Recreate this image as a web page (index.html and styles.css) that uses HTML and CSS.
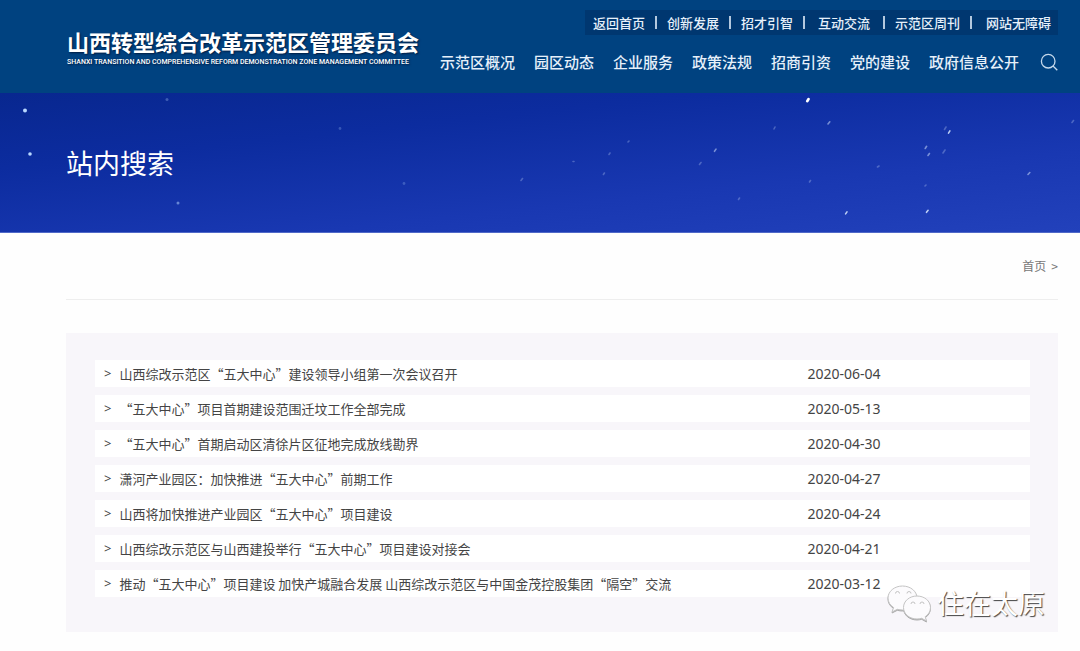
FILE: index.html
```html
<!DOCTYPE html>
<html lang="zh-CN">
<head>
<meta charset="utf-8">
<meta name="viewport" content="width=device-width, initial-scale=1">
<title>站内搜索</title>
<link rel="stylesheet" href="styles.css">
</head>
<body>
<header class="header">
  <a class="logo" href="#">
    <span class="logo-cn">山西转型综合改革示范区管理委员会</span>
    <span class="logo-en">SHANXI TRANSITION AND COMPREHENSIVE REFORM DEMONSTRATION ZONE MANAGEMENT COMMITTEE</span>
  </a>
  <div class="menus">
    <nav class="top-links" aria-label="快捷链接">
      <a href="#">返回首页</a><span class="bar"></span>
      <a href="#">创新发展</a><span class="bar"></span>
      <a href="#">招才引智</a><span class="bar"></span>
      <a class="spaced" href="#">互动交流</a><span class="bar"></span>
      <a href="#">示范区周刊</a><span class="bar"></span>
      <a class="last" href="#">网站无障碍</a>
    </nav>
    <div class="main-row">
      <nav class="main-nav" aria-label="主导航">
        <a href="#">示范区概况</a>
        <a href="#">园区动态</a>
        <a href="#">企业服务</a>
        <a href="#">政策法规</a>
        <a href="#">招商引资</a>
        <a href="#">党的建设</a>
        <a href="#">政府信息公开</a>
      </nav>
      <button class="search" type="button" aria-label="搜索">
        <svg viewBox="0 0 18 18" width="18" height="18"><circle cx="8.2" cy="8.2" r="6.8"/><path d="M13 13 17.300 17.300"/></svg>
      </button>
    </div>
  </div>
</header>

<section class="banner">
  <svg class="stars" viewBox="0 0 1080 140" preserveAspectRatio="xMidYMid slice" aria-hidden="true">
    <g fill="#b9d8ff">
      <circle cx="25" cy="18" r="2"/><circle cx="30" cy="61.500" r="1.800"/>
      <circle cx="167" cy="7" r="1.500" opacity=".3"/><circle cx="178" cy="110.500" r="1.500" opacity=".5"/>
      <circle cx="340" cy="36" r="1.400" opacity=".25"/><circle cx="404" cy="91" r="1.400" opacity=".25"/>
    </g>
    <g stroke="#d9e8ff" stroke-linecap="round" stroke-width="1.600">
      <path stroke="#fff" stroke-width="2.800" d="m807.300 8.600 1.200-2"/>
      <path opacity=".85" d="m948.500 40.600 1.400-2.200M926.500 119.800l1.600-2M845.600 121.400l1.400-2"/>
      <g opacity=".5"><path d="m714.500 58.800 1.500-2.200M928 63l1.400-2M925.200 56l1.400-2.200M1028 82l1.800-2M828 31.500l1.800-2.200"/></g>
      <g opacity=".28"><path d="m609 62 1-1.500M603.400 82l1-1.500M628 49.500l1-1M699.500 72l1.500-2M774 36.500l1-2M738.500 107l1-1.500M809.500 89.500l1-1.500M877.500 74.500l1.500-1M944.500 37l1.500-2.500M943 60.500l2-3M1072 30l1.500-2M521 88l1.500-2M573 69h1M925 93.500l1-1"/></g>
    </g>
  </svg>
  <h1 class="banner-title">站内搜索</h1>
</section>

<main class="content">
  <nav class="crumbs" aria-label="面包屑"><a href="#">首页</a><span>&gt;</span></nav>
  <section class="panel">
    <ul class="results">
      <li><a href="#">山西综改示范区“五大中心”建设领导小组第一次会议召开</a><time>2020-06-04</time></li>
      <li><a href="#">“五大中心”项目首期建设范围迁坟工作全部完成</a><time>2020-05-13</time></li>
      <li><a href="#">“五大中心”首期启动区清徐片区征地完成放线勘界</a><time>2020-04-30</time></li>
      <li><a href="#">潇河产业园区：加快推进“五大中心”前期工作</a><time>2020-04-27</time></li>
      <li><a href="#">山西将加快推进产业园区“五大中心”项目建设</a><time>2020-04-24</time></li>
      <li><a href="#">山西综改示范区与山西建投举行“五大中心”项目建设对接会</a><time>2020-04-21</time></li>
      <li><a href="#">推动“五大中心”项目建设 加快产城融合发展 山西综改示范区与中国金茂控股集团“隔空”交流</a><time>2020-03-12</time></li>
    </ul>
    <div class="watermark">
      <svg viewBox="0 0 46 38" width="46" height="38" aria-hidden="true">
        <path d="M16.500 2C8.500 2 2 7.300 2 14c0 4 2 7.200 5.600 9.500L6 28l5.300-2.700c1.800.5 3.400.7 5.200.7 8 0 14.500-5.300 14.500-12S24.500 2 16.500 2Z"/>
        <path d="M31 12c-7.500 0-13.500 5-13.500 11.500S23.500 35 31 35c1.700 0 3.300-.3 4.700-.7L40.500 37l-1.300-4.300c3.200-2.100 5.300-5.500 5.300-9.200C44.500 17 38.500 12 31 12Z"/>
        <path class="eye" d="M9.500 9.500a2 2 0 0 1 4 0M21 9.500a2 2 0 0 1 4 0M25 20a2 2 0 0 1 4 0M34 20a2 2 0 0 1 4 0"/>
      </svg>
      <span>住在太原</span>
    </div>
  </section>
</main>
</body>
</html>
```
FILE: styles.css
```css
* {
  box-sizing: border-box;
}

body {
  margin: 0;
  background: #fefefe;
  color: #444;
  font-family: "Noto Sans CJK SC", "Noto Sans", sans-serif;
  font-size: 13px;
}

a {
  color: inherit;
  text-decoration: none;
}

.header {
  display: flex;
  justify-content: space-between;
  padding: 10px 22px 19px 66px;
  background: #004280;
  color: #e6f0fa;
}

.logo {
  display: flex;
  flex-direction: column;
  padding: 16px 0 0 1px;
  color: #fff;
  text-shadow: 1px 1px 2px #001c40;
  white-space: nowrap;
}

.logo-cn {
  font-size: 22px;
  font-weight: 700;
  line-height: 30px;
}

.logo-en {
  font-family: Roboto, "Liberation Sans", sans-serif;
  font-size: 7px;
  font-weight: 500;
  line-height: 12px;
}

.menus {
  display: flex;
  flex-direction: column;
  align-items: flex-end;
  gap: 14px;
}

.top-links {
  display: flex;
  align-items: center;
  gap: 10px;
  padding: 0 7px 0 8px;
  background: #003770;
  font-weight: 500;
  line-height: 25px;
  white-space: nowrap;
}

.bar {
  width: 2px;
  height: 13px;
  background: #b4c8de;
}

.spaced {
  padding: 0 3px;
}

.last {
  padding-left: 4px;
}

.main-row {
  display: flex;
  align-items: center;
  gap: 21px;
}

.main-nav {
  display: flex;
  gap: 19px;
  font-size: 15px;
  font-weight: 500;
  line-height: 25px;
  white-space: nowrap;
}

.search {
  display: flex;
  padding: 0;
  border: 0;
  background: none;
}

.search svg {
  fill: none;
  stroke: #c5d9ec;
  stroke-width: 1.3;
}

.banner {
  position: relative;
  padding: 50px 66px;
  background: linear-gradient(174deg, #08278f 0%, #0c2c9f 30%, #1938b2 68%, #2241bb 100%);
  border-bottom: 1px solid #5069c8;
}

.stars {
  position: absolute;
  inset: 0;
  width: 100%;
  height: 100%;
}

.banner-title {
  position: relative;
  margin: 0;
  color: #fff;
  font-size: 27px;
  font-weight: 400;
  line-height: 39px;
}

.content {
  padding: 0 22px 19px 66px;
}

.crumbs {
  display: flex;
  justify-content: flex-end;
  gap: 5px;
  padding: 24px 0;
  border-bottom: 1px solid #eee;
  color: #777;
  font-size: 12px;
  line-height: 18px;
}

.panel {
  position: relative;
  margin-top: 33px;
  padding: 27px 28px 35px 29px;
  background: #f8f6fa;
}

.results {
  display: flex;
  flex-direction: column;
  gap: 8px;
  margin: 0;
  padding: 0;
  list-style: none;
}

.results li {
  display: grid;
  grid-template-columns: 320fr 100fr;
  background: #fff;
  line-height: 27px;
}

.results a {
  display: flex;
  gap: 8px;
  padding-left: 9px;
}

.results a::before {
  content: ">";
  font-family: "Noto Sans", sans-serif;
}

.results time {
  font-family: "Noto Sans", sans-serif;
  font-size: 14px;
}

.watermark {
  position: absolute;
  right: 13px;
  bottom: 10px;
  display: flex;
  align-items: center;
  gap: 5px;
  color: #fff;
  font-size: 27px;
  font-weight: 400;
  line-height: 38px;
  text-shadow: 1px 1px 1px #444;
}

.watermark svg {
  fill: #fcfbfd;
  stroke: #c4c4c4;
  stroke-width: 1;
  filter: drop-shadow(0 1px 0 #aaa);
}

.watermark .eye {
  fill: none;
}
```
